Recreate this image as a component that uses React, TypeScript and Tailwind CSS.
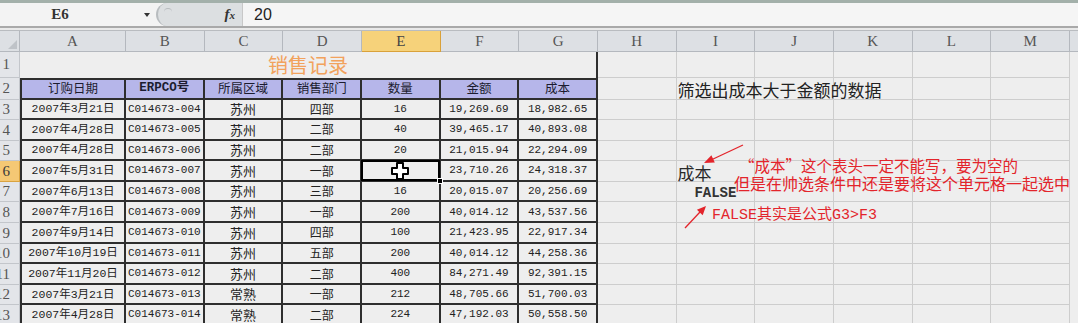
import React from "react";

type Row = [string, string, string, string, string, string, string];

const rows: Row[] = [
  ["2007年3月21日", "C014673-004", "苏州", "四部", "16", "19,269.69", "18,982.65"],
  ["2007年4月28日", "C014673-005", "苏州", "二部", "40", "39,465.17", "40,893.08"],
  ["2007年4月28日", "C014673-006", "苏州", "二部", "20", "21,015.94", "22,294.09"],
  ["2007年5月31日", "C014673-007", "苏州", "一部", "", "23,710.26", "24,318.37"],
  ["2007年6月13日", "C014673-008", "苏州", "三部", "16", "20,015.07", "20,256.69"],
  ["2007年7月16日", "C014673-009", "苏州", "一部", "200", "40,014.12", "43,537.56"],
  ["2007年9月14日", "C014673-010", "苏州", "四部", "100", "21,423.95", "22,917.34"],
  ["2007年10月19日", "C014673-011", "苏州", "五部", "200", "40,014.12", "44,258.36"],
  ["2007年11月20日", "C014673-012", "苏州", "二部", "400", "84,271.49", "92,391.15"],
  ["2007年3月21日", "C014673-013", "常熟", "一部", "212", "48,705.66", "51,700.03"],
  ["2007年4月28日", "C014673-014", "常熟", "二部", "224", "47,192.03", "50,558.50"],
];

const heads = ["订购日期", "ERPCO号", "所属区域", "销售部门", "数量", "金额", "成本"];
const letters = ["A", "B", "C", "D", "E", "F", "G", "H", "I", "J", "K", "L", "M"];

const mono = "font-['Liberation_Mono','Noto_Sans_CJK_SC',monospace]";
const cjk = "font-['Noto_Sans_CJK_SC',sans-serif]";
const serif = "font-['Liberation_Serif',serif]";

const RowHead = ({ n, active }: { n: number; active?: boolean }) => (
  <div
    className={`flex w-[20px] shrink-0 items-center justify-end overflow-hidden border-r border-b pr-[9px] text-[15px] ${serif} ${
      active
        ? "border-[#d9a340] bg-[#f5c874] text-[#3a3a3a]"
        : "border-[#c3c6cb] bg-[#e3e5e9] text-[#555]"
    }`}
  >
    {n}
  </div>
);

const Light = ({ w, children, className = "" }: { w: string; children?: React.ReactNode; className?: string }) => (
  <div className={`${w} shrink-0 border-r border-b border-[#cdcdcd] ${className}`}>{children}</div>
);

const TCell = ({
  w,
  first,
  className = "",
  children,
}: {
  w: string;
  first?: boolean;
  className?: string;
  children?: React.ReactNode;
}) => (
  <div
    className={`${w} flex shrink-0 items-center justify-center whitespace-nowrap border-r-2 border-b-2 border-[#2e2e2e] ${
      first ? "border-l-2" : ""
    } ${className}`}
  >
    {children}
  </div>
);

const Cursor = () => (
  <svg width="18" height="18" viewBox="0 0 18 18">
    <path
      d="M6 1 H12 V6 H17 V12 H12 V17 H6 V12 H1 V6 H6 Z"
      fill="#fff"
      stroke="#000"
      strokeWidth="2"
      strokeLinejoin="round"
    />
  </svg>
);

const BW = "w-[78.67px]";
const AW = "w-[106px]";

export default function App() {
  return (
    <div className="relative h-[323px] w-[1078px] overflow-hidden bg-[#eeeeee]">
      {/* formula bar */}
      <div className="flex h-[26px] border-t-[3px] border-[#a3b0aa] bg-[#f3f3f3]">
        <div className="flex w-[156px] items-center">
          <span className={`w-[120px] text-center text-[15px] font-bold text-[#333] ${serif}`}>E6</span>
          <span className="ml-[24px] h-0 w-0 border-x-[3px] border-t-[4px] border-x-transparent border-t-[#333]" />
        </div>
        <div className="flex w-[86px] items-center justify-end rounded-l-full border-l-2 border-[#b8bcbf] bg-[#dcdfe1] pr-[7px]">
          <span className="mr-auto ml-[6px] mt-[-6px] h-[8px] w-[8px] rounded-full border-t border-[#b8bcbf]" />
          <span className={`${serif} text-[15px] font-bold italic text-[#333]`}>
            f<span className="text-[11px]">x</span>
          </span>
        </div>
        <div className="flex flex-1 items-center border-l border-[#c8c8c8] bg-[#f5f5f5] pl-[11px] font-['Liberation_Sans',sans-serif] text-[16px] text-[#222]">
          20
        </div>
      </div>
      <div className="h-[5px] border-t-2 border-b border-t-[#a9a9a9] border-b-[#b9bcc0] bg-[#e9e9e9]" />

      {/* column headers */}
      <div className={`flex h-[21px] text-[15px] ${serif}`}>
        <div className="relative w-[20px] shrink-0 border-r border-b border-[#b4b8be] bg-[#dde0e4]">
          <span className="absolute right-[2px] bottom-[2px] h-0 w-0 border-b-[9px] border-l-[9px] border-b-[#bfc3c8] border-l-transparent" />
        </div>
        {letters.map((l, i) => (
          <div
            key={l}
            className={`${i === 0 ? AW : BW} flex shrink-0 items-center justify-center border-r border-b ${
              l === "E"
                ? "border-[#d9a13a] bg-[#f6d27a] text-[#444]"
                : "border-[#b4b8be] bg-[#dde0e4] text-[#555]"
            }`}
          >
            {l}
          </div>
        ))}
        <div className="flex-1 border-b border-[#b4b8be] bg-[#dde0e4]" />
      </div>

      {/* row 1 */}
      <div className="flex h-[26px]">
        <RowHead n={1} />
        <div
          className={`flex w-[578px] shrink-0 items-center justify-center border-r-2 border-[#2e2e2e] text-[20px] text-[#f2a25c] ${cjk}`}
        >
          销售记录
        </div>
        {letters.slice(7).map((l) => (
          <Light key={l} w={BW} />
        ))}
      </div>

      {/* row 2 */}
      <div className="flex h-[21.5px]">
        <RowHead n={2} />
        {heads.map((h, i) => (
          <TCell
            key={h}
            w={i === 0 ? AW : BW}
            first={i === 0}
            className={`border-t-2 bg-[#b6b6ea] text-[12.5px] text-[#1c1c30] ${i === 1 ? mono + " text-[10.5px] font-bold" : cjk}`}
          >
            {h}
          </TCell>
        ))}
        <Light w={BW} />
        <Light w={BW} className="relative">
          <span className={`absolute bottom-[1px] left-[1px] whitespace-nowrap text-[17px] leading-none text-[#222] ${cjk}`}>
            筛选出成本大于金额的数据
          </span>
        </Light>
        {letters.slice(9).map((l) => (
          <Light key={l} w={BW} />
        ))}
      </div>

      {/* data rows */}
      {rows.map((r, idx) => {
        const n = idx + 3;
        return (
          <div key={n} className="flex h-[20.6px]">
            <RowHead n={n} active={n === 6} />
            <TCell w={AW} first className={`text-[11.5px] text-[#222] ${mono}`}>
              {r[0]}
            </TCell>
            <TCell w={BW} className={`text-[11px] text-[#222] ${mono}`}>
              {r[1]}
            </TCell>
            <TCell w={BW} className={`text-[13px] text-[#222] ${cjk}`}>
              {r[2]}
            </TCell>
            <TCell w={BW} className={`text-[12px] text-[#222] ${cjk}`}>
              {r[3]}
            </TCell>
            {n === 6 ? (
              <TCell w={BW} className="relative">
                <span className="absolute -top-[1px] -left-[1px] -right-[1px] -bottom-[1px] border-2 border-black" />
                <span className="absolute -right-[4px] -bottom-[4px] h-[6px] w-[6px] border border-white bg-black" />
                <Cursor />
              </TCell>
            ) : (
              <TCell w={BW} className={`text-[11px] text-[#222] ${mono}`}>
                {r[4]}
              </TCell>
            )}
            <TCell w={BW} className={`text-[11px] text-[#222] ${mono}`}>
              {r[5]}
            </TCell>
            <TCell w={BW} className={`text-[11px] text-[#222] ${mono}`}>
              {r[6]}
            </TCell>
            <Light w={BW} />
            <Light w={BW} className="relative">
              {n === 6 && (
                <span className={`absolute bottom-0 left-[1px] whitespace-nowrap text-[17px] leading-none text-[#2a2a2a] ${cjk}`}>
                  成本
                </span>
              )}
              {n === 7 && (
                <span className="flex h-full items-end justify-center pb-[1px] font-['Liberation_Mono',monospace] text-[14px] font-bold leading-none text-[#333]">
                  FALSE
                </span>
              )}
            </Light>
            {letters.slice(9).map((l) => (
              <Light key={l} w={BW} />
            ))}
          </div>
        );
      })}

      {/* red annotations */}
      <div className={`absolute top-[156px] left-[739px] whitespace-nowrap text-[15.5px] leading-[18px] text-[#e3242b] ${cjk}`}>
        “成本”这个表头一定不能写，要为空的
      </div>
      <div className={`absolute top-[174px] left-[734px] whitespace-nowrap text-[16px] leading-[18px] text-[#e3242b] ${cjk}`}>
        但是在帅选条件中还是要将这个单元格一起选中
      </div>
      <div className={`absolute top-[207px] left-[712px] whitespace-nowrap text-[15px] leading-[18px] text-[#e3242b] ${mono}`}>
        FALSE其实是公式G3&gt;F3
      </div>
      <svg className="pointer-events-none absolute top-0 left-0" width="1078" height="323">
        <line x1="743" y1="145" x2="711" y2="160" stroke="#e3242b" strokeWidth="1.3" />
        <polygon points="704,163 711.4,155.2 714.8,162.5" fill="#e3242b" />
        <line x1="685" y1="228" x2="700" y2="212" stroke="#e3242b" strokeWidth="1.3" />
        <polygon points="706,206 702.7,215.3 696.9,209.7" fill="#e3242b" />
      </svg>
    </div>
  );
}
